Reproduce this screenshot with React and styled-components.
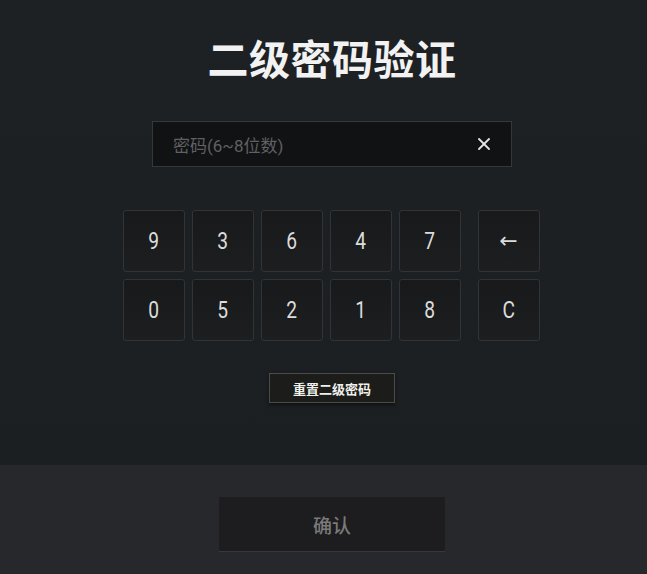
import React from "react";
import styled, { createGlobalStyle } from "styled-components";
import { X } from "lucide-react";

const GlobalStyle = createGlobalStyle`
  html, body {
    margin: 0;
    padding: 0;
    background: #1d2023;
  }
  body {
    font-family: "Roboto", "Noto Sans CJK SC", sans-serif;
  }
`;

const Page = styled.div`
  width: 647px;
  height: 574px;
  display: flex;
  flex-direction: column;
  overflow: hidden;
`;

const Main = styled.div`
  height: 465px;
  display: flex;
  flex-direction: column;
  align-items: center;
  padding-left: 17px;
  box-sizing: border-box;
  background: linear-gradient(180deg, #1e2124 0%, #1c1f22 100%);
`;

const Title = styled.h1`
  margin: 34px 0 0;
  font-family: "Noto Sans CJK SC", sans-serif;
  font-weight: 700;
  font-size: 41px;
  line-height: 46px;
  color: #f2f2f2;
  letter-spacing: 0.5px;
`;

const InputBox = styled.div`
  margin-top: 41px;
  width: 360px;
  height: 46px;
  box-sizing: border-box;
  display: flex;
  align-items: center;
  justify-content: space-between;
  padding: 0 17px 0 20px;
  background: #111214;
  border: 1px solid #35383a;
`;

const Placeholder = styled.span`
  font-family: "Roboto", "Noto Sans CJK SC", sans-serif;
  font-size: 17px;
  color: #5f6062;
`;

const ClearIcon = styled(X)`
  color: #e6e6e6;
`;

const Keypad = styled.div`
  margin-top: 43px;
  margin-left: -2px;
  display: flex;
  gap: 17px;
`;

const Digits = styled.div`
  display: grid;
  grid-template-columns: repeat(5, 62px);
  grid-auto-rows: 62px;
  gap: 7px;
`;

const Actions = styled.div`
  display: grid;
  grid-template-columns: 62px;
  grid-auto-rows: 62px;
  gap: 7px;
`;

const Key = styled.button`
  box-sizing: border-box;
  border: 1px solid #313437;
  border-radius: 3px;
  background: linear-gradient(180deg, #18191b 0%, #1c1e20 100%);
  color: #dcdcdc;
  padding: 0;
  display: flex;
  align-items: center;
  justify-content: center;
`;

const KeyLabel = styled.span`
  display: inline-block;
  font-family: "Roboto", sans-serif;
  font-size: 24px;
  transform: scaleX(0.8);
`;

const ArrowLabel = styled.span`
  font-family: "DejaVu Sans", sans-serif;
  font-size: 22px;
  line-height: 1;
`;

const ResetButton = styled.button`
  margin-top: 32px;
  width: 126px;
  height: 30px;
  box-sizing: border-box;
  border: 1px solid #4b4c47;
  background: #1c1c1a;
  box-shadow: 0 2px 3px rgba(0, 0, 0, 0.5);
  color: #f0f0ea;
  font-family: "Noto Sans CJK SC", sans-serif;
  font-weight: 700;
  font-size: 13px;
  padding: 0;
`;

const Footer = styled.div`
  flex: 1;
  background: #27282b;
  display: flex;
  justify-content: center;
  padding-left: 17px;
  padding-top: 32px;
`;

const ConfirmButton = styled.button`
  width: 226px;
  height: 54px;
  border: none;
  background: #1d1d1f;
  box-shadow: 0 1px 0 #37383b;
  color: #7a7a7a;
  font-family: "Noto Sans CJK SC", sans-serif;
  font-weight: 500;
  font-size: 19px;
  padding: 0;
`;

const digits = ["9", "3", "6", "4", "7", "0", "5", "2", "1", "8"];

export default function App() {
  return (
    <Page>
      <GlobalStyle />
      <Main>
        <Title>二级密码验证</Title>
        <InputBox>
          <Placeholder>密码(6~8位数)</Placeholder>
          <ClearIcon size={20} strokeWidth={2.2} />
        </InputBox>
        <Keypad>
          <Digits>
            {digits.map((d) => (
              <Key key={d}>
                <KeyLabel>{d}</KeyLabel>
              </Key>
            ))}
          </Digits>
          <Actions>
            <Key>
              <ArrowLabel>←</ArrowLabel>
            </Key>
            <Key>
              <KeyLabel>C</KeyLabel>
            </Key>
          </Actions>
        </Keypad>
        <ResetButton>重置二级密码</ResetButton>
      </Main>
      <Footer>
        <ConfirmButton>确认</ConfirmButton>
      </Footer>
    </Page>
  );
}
